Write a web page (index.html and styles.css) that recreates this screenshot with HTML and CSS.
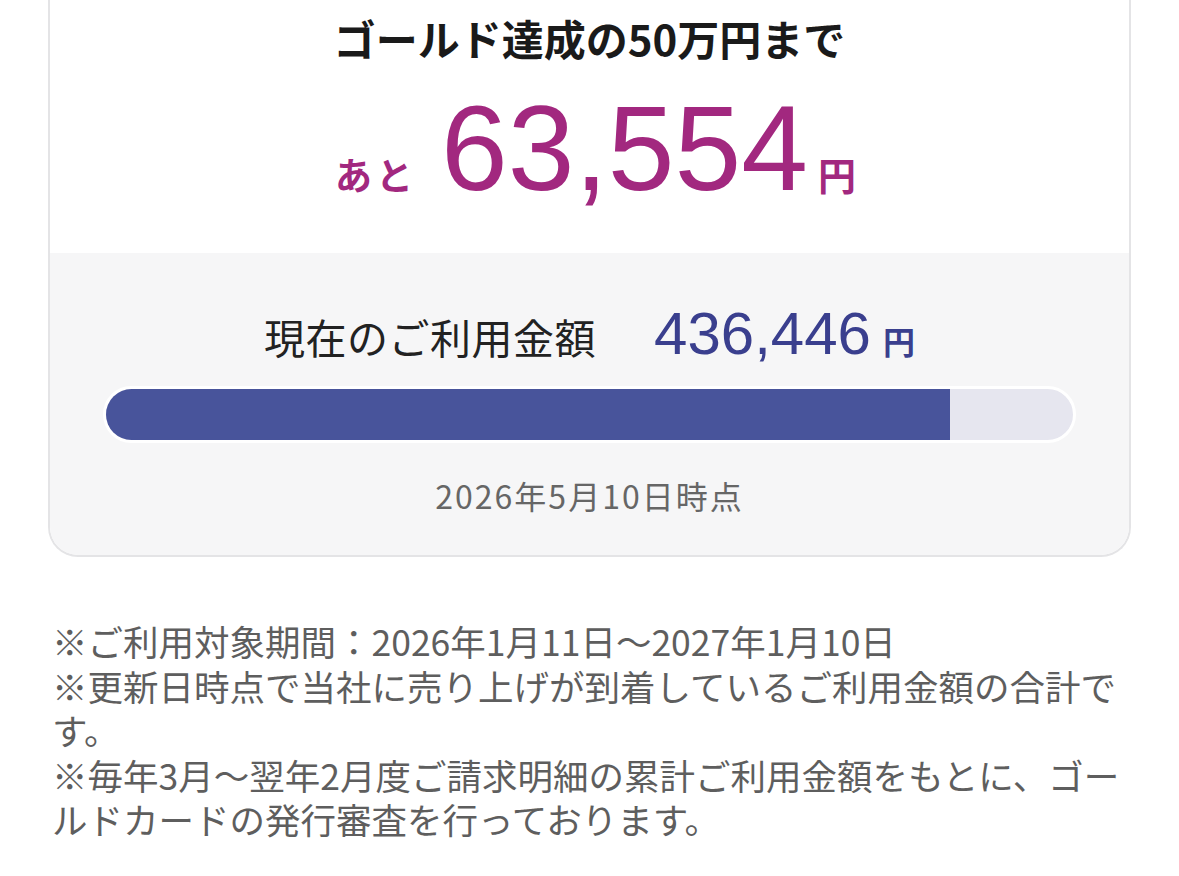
FILE: index.html
```html
<!DOCTYPE html>
<html lang="ja">
<head>
  <meta charset="UTF-8">
  <title>ゴールド達成までのご利用金額</title>
  <meta name="viewport" content="width=device-width, initial-scale=1.0">
  <link rel="stylesheet" href="styles.css">
</head>
<body>
  <div class="card">
    <div class="goal">
      <div class="goal-title">ゴールド達成の50万円まで</div>
      <div class="remain">
        <span class="remain-pre">あと</span>
        <span class="remain-num">63,554</span>
        <span class="remain-yen">円</span>
      </div>
    </div>
    <div class="usage">
      <div class="usage-row">
        <span class="usage-label">現在のご利用金額</span>
        <span class="usage-num">436,446</span>
        <span class="usage-yen">円</span>
      </div>
      <div class="bar">
        <div class="bar-fill" style="width: 87.29%"></div>
      </div>
      <div class="usage-date">2026年5月10日時点</div>
    </div>
  </div>

  <div class="notes">
    <p>※ご利用対象期間：2026年1月11日〜2027年1月10日</p>
    <p>※更新日時点で当社に売り上げが到着しているご利用金額の合計です。</p>
    <p>※毎年3月〜翌年2月度ご請求明細の累計ご利用金額をもとに、ゴールドカードの発行審査を行っております。</p>
  </div>
</body>
</html>
```

FILE: styles.css
```css
body { margin: 0; background: #fff; font-family: "Noto Sans CJK JP", "Noto Sans", sans-serif; color: #1a1a1a; }

.card { margin: 0 48px; border: 2px solid #e4e4e6; border-top: 0; border-radius: 0 0 30px 30px; overflow: hidden; }

.goal { background: #fff; padding: 13px 0 45px; text-align: center; }
.goal-title { font-size: 42px; font-weight: 700; line-height: 50px; }
.remain { display: flex; justify-content: center; align-items: baseline; margin-top: 25px; padding-left: 12px; color: #a2287f; line-height: 1; }
.remain-pre { font-size: 37px; font-weight: 700; margin-right: 24px; letter-spacing: 4px; }
.remain-num { font-family: "Liberation Sans", Arial, sans-serif; font-size: 120px; }
.remain-yen { font-size: 38px; font-weight: 700; margin-left: 10px; }

.usage { background: #f6f6f7; padding: 51px 51px 37px; }
.usage-row { display: flex; justify-content: center; align-items: baseline; line-height: 1; }
.usage-label { font-size: 41px; color: #222; letter-spacing: 0.5px; margin-right: 58px; }
.usage-num { font-family: "Liberation Sans", Arial, sans-serif; font-size: 60px; color: #3a3f8e; }
.usage-yen { font-size: 32px; font-weight: 700; color: #3a3f8e; margin-left: 12px; }

.bar { margin: 22px 2px 0; height: 51px; border: 3px solid #fff; border-radius: 30px; background: #e6e6ef; overflow: hidden; }
.bar-fill { height: 100%; background: #48549b; }

.usage-date { margin-top: 30px; font-size: 32px; line-height: 45px; letter-spacing: 2px; color: #666; text-align: center; }

.notes { padding: 62px 52px 0; color: #5e5e5e; font-size: 35.5px; line-height: 44.5px; }
.notes p { margin: 0; }
```
